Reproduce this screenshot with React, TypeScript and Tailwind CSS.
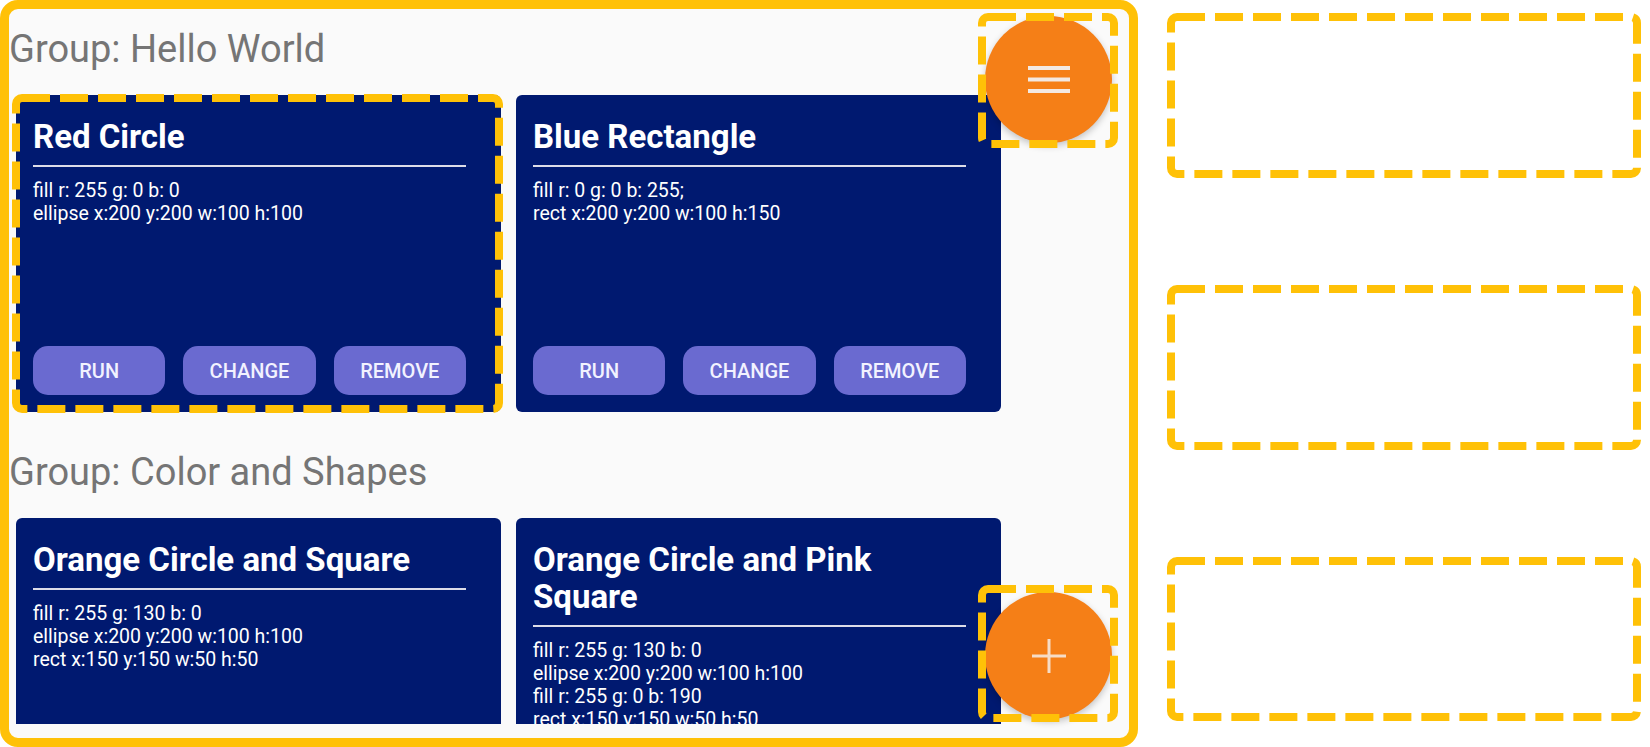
import React from "react";

type Sketch = {
  title: string;
  lines: string[];
};

const groups: { name: string; sketches: Sketch[] }[] = [
  {
    name: "Hello World",
    sketches: [
      {
        title: "Red Circle",
        lines: ["fill r: 255 g: 0 b: 0", "ellipse x:200 y:200 w:100 h:100"],
      },
      {
        title: "Blue Rectangle",
        lines: ["fill r: 0 g: 0 b: 255;", "rect x:200 y:200 w:100 h:150"],
      },
    ],
  },
  {
    name: "Color and Shapes",
    sketches: [
      {
        title: "Orange Circle and Square",
        lines: [
          "fill r: 255 g: 130 b: 0",
          "ellipse x:200 y:200 w:100 h:100",
          "rect x:150 y:150 w:50 h:50",
        ],
      },
      {
        title: "Orange Circle and Pink Square",
        lines: [
          "fill r: 255 g: 130 b: 0",
          "ellipse x:200 y:200 w:100 h:100",
          "fill r: 255 g: 0 b: 190",
          "rect x:150 y:150 w:50 h:50",
        ],
      },
    ],
  },
];

// yellow dashed outline drawn over things (annotation marks)
const Dashed = ({ w, h }: { w: number; h: number }) => (
  <svg width={w} height={h} className="block">
    <rect
      x={4}
      y={4}
      width={w - 8}
      height={h - 8}
      rx={6}
      fill="none"
      stroke="#ffc107"
      strokeWidth={8}
      strokeDasharray="28 10"
    />
  </svg>
);

const SketchCard = ({ sketch }: { sketch: Sketch }) => {
  return (
    <div className="w-[485px] h-[317px] shrink-0 flex flex-col rounded-[6px] bg-[#001970] pl-[17px] pr-[35px] pt-[23px] pb-[17px]">
      <h2 className="text-[33px] leading-[37px] font-bold text-white">
        {sketch.title}
      </h2>

      {/* divider */}
      <div className="mt-[10px] h-[2px] bg-[#dcdce8]" />

      <div className="mt-[12px] text-[19.5px] leading-[23px] text-white">
        {sketch.lines.map((l, i) => (
          <div key={i}>{l}</div>
        ))}
      </div>

      {/* actions */}
      <div className="mt-auto flex gap-[18px]">
        {["RUN", "CHANGE", "REMOVE"].map((b) => (
          <button
            key={b}
            className="flex-1 h-[49px] rounded-[15px] bg-[#6a6ad0] text-[20px] font-medium text-[#f2f2ff]"
          >
            {b}
          </button>
        ))}
      </div>
    </div>
  );
};

const App = () => {
  return (
    <div className="relative w-[1650px] h-[747px] bg-white font-['Roboto',sans-serif] overflow-hidden">
      <div className="flex">
        {/* main frame */}
        <div className="relative w-[1138px] h-[747px] shrink-0 rounded-[18px] border-[9px] border-[#ffc107] bg-[#fafafa] overflow-hidden">
          <div className="h-[715px] overflow-hidden">
            {groups.map((g, gi) => (
              <div key={g.name} className={gi === 0 ? "pt-[18px]" : "pt-[38px]"}>
                <h1 className="text-[38px] leading-[44px] text-[#757575]">
                  Group: {g.name}
                </h1>
                <div className="mt-[24px] pl-[7px] flex gap-[15px]">
                  {g.sketches.map((s) => (
                    <SketchCard key={s.title} sketch={s} />
                  ))}
                </div>
              </div>
            ))}
          </div>

          {/* menu fab */}
          <button className="absolute top-[7px] right-[17px] w-[127px] h-[127px] rounded-full bg-[#f57f17] shadow-[0_3px_7px_rgba(0,0,0,0.22)] flex items-center justify-center">
            <svg width="42" height="28" viewBox="0 0 42 28">
              <rect x="0" y="0" width="42" height="4" fill="#f3e9e2" />
              <rect x="0" y="11.5" width="42" height="4" fill="#f3e9e2" />
              <rect x="0" y="23" width="42" height="4" fill="#f3e9e2" />
            </svg>
          </button>

          {/* add fab */}
          <button className="absolute bottom-[19px] right-[17px] w-[127px] h-[127px] rounded-full bg-[#f57f17] shadow-[0_3px_7px_rgba(0,0,0,0.22)] flex items-center justify-center">
            <svg width="34" height="34" viewBox="0 0 34 34">
              <rect x="0" y="15.5" width="34" height="3" fill="#f6dcc6" />
              <rect x="15.5" y="0" width="3" height="34" fill="#f6dcc6" />
            </svg>
          </button>
        </div>

        {/* right placeholders */}
        <div className="ml-[29px] pt-[13px] flex flex-col gap-[107px]">
          <div className="w-[474px] h-[165px] bg-white">
            <Dashed w={474} h={165} />
          </div>
          <div className="w-[474px] h-[165px] bg-white">
            <Dashed w={474} h={165} />
          </div>
          <div className="w-[474px] h-[164px] bg-white">
            <Dashed w={474} h={164} />
          </div>
        </div>
      </div>

      {/* annotation marks */}
      <div className="absolute left-[12px] top-[94px]">
        <Dashed w={491} h={319} />
      </div>
      <div className="absolute left-[978px] top-[13px]">
        <Dashed w={140} h={135} />
      </div>
      <div className="absolute left-[978px] top-[585px]">
        <Dashed w={140} h={137} />
      </div>
    </div>
  );
};

export default App;
